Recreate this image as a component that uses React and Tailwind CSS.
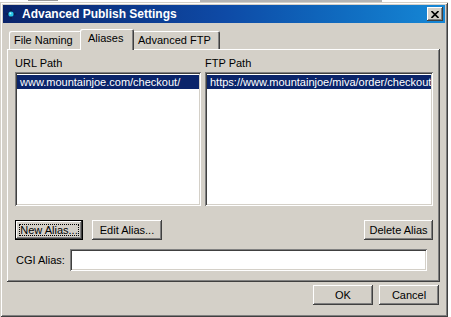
import React from "react";

const raised =
  "shadow-[inset_-1px_-1px_0_#404040,inset_1px_1px_0_#ffffff,inset_-2px_-2px_0_#808080,inset_2px_2px_0_#d4d0c8]";
const sunken =
  "shadow-[inset_1px_1px_0_#808080,inset_-1px_-1px_0_#ffffff,inset_2px_2px_0_#404040,inset_-2px_-2px_0_#d4d0c8]";
const tabEdge =
  "shadow-[inset_1px_1px_0_#ffffff,inset_-1px_0_0_#404040,inset_-2px_0_0_#808080]";

const TitleIcon = () => (
  <svg width="12" height="12" viewBox="0 0 12 12">
    <path d="M6 0 L7.3 4.7 L12 6 L7.3 7.3 L6 12 L4.7 7.3 L0 6 L4.7 4.7 Z" fill="#0b1a40" />
    <circle cx="6" cy="6" r="2.6" fill="#28c8e8" />
    <circle cx="5.4" cy="5.4" r="0.9" fill="#b8f4ff" />
  </svg>
);

const Button = ({ children, width, isDefault }) =>
  isDefault ? (
    <div
      className="h-[20px] border border-black bg-[#d4d0c8] p-[3px] shadow-[inset_-1px_-1px_0_#404040,inset_1px_1px_0_#ffffff,inset_-2px_-2px_0_#808080]"
      style={{ width }}
    >
      <div className="flex h-full items-center justify-center border border-dotted border-black leading-none">
        {children}
      </div>
    </div>
  ) : (
    <div
      className={`flex h-[20px] items-center justify-center bg-[#d4d0c8] leading-none ${raised}`}
      style={{ width }}
    >
      {children}
    </div>
  );

export default function App() {
  return (
    <div className="h-[317px] w-[451px] overflow-hidden bg-white font-['Liberation_Sans',Arial,sans-serif] text-[11px] text-black">
      {/* window behind */}
      <div className="flex h-[2px] items-start">
        <div className="ml-[28px] h-[1px] w-[30px] bg-[#9a9a9a]" />
        <div className="ml-[142px] h-[2px] w-[182px] bg-[#b4b4b4]" />
      </div>

      <div className="flex h-[315px] w-[448px] flex-col bg-[#d4d0c8] p-[3px] shadow-[inset_1px_1px_0_#d4d0c8,inset_-1px_-1px_0_#404040,inset_2px_2px_0_#ffffff,inset_-2px_-2px_0_#808080]">
        {/* Title bar */}
        <div className="flex h-[18px] items-center bg-gradient-to-r from-[#0a246a] via-[#0e4aa6] to-[#1688d6] pl-[2px] pr-[2px]">
          <TitleIcon />
          <span className="ml-[5px] text-[12px] font-bold text-white">Advanced Publish Settings</span>
          <div className={`ml-auto flex h-[14px] w-[16px] items-center justify-center bg-[#d4d0c8] ${raised}`}>
            <svg width="8" height="7" viewBox="0 0 8 7">
              <path d="M0.5 0 L7.5 7 M7.5 0 L0.5 7" stroke="#000" strokeWidth="1.6" />
            </svg>
          </div>
        </div>

        {/* Tabs */}
        <div className="ml-[6px] mt-[6px] flex h-[20px] items-end">
          <div className={`h-[18px] w-[73px] rounded-t-[2px] pl-[5px] pt-[3px] leading-[13px] ${tabEdge}`}>File Naming</div>
          <div className={`relative z-10 -mx-[2px] -mb-[1px] h-[21px] w-[54px] rounded-t-[2px] bg-[#d4d0c8] pl-[8px] pt-[3px] leading-[13px] ${tabEdge}`}>
            Aliases
          </div>
          <div className={`h-[18px] w-[88px] rounded-t-[2px] pl-[6px] pt-[3px] leading-[13px] ${tabEdge}`}>Advanced FTP</div>
        </div>

        {/* Panel */}
        <div className={`ml-[4px] flex h-[233px] w-[433px] flex-col pl-[8px] pr-[7px] pt-[8px] ${raised}`}>
          <div className="flex gap-[4px]">
            <div className="flex w-[187px] flex-col">
              <div className="leading-[13px]">URL Path</div>
              <div className={`mt-[2px] h-[134px] bg-white p-[2px] ${sunken}`}>
                <div className="mt-[1px] h-[14px] overflow-hidden whitespace-nowrap bg-[#0a246a] pl-[3px] leading-[14px] text-white">
                  www.mountainjoe.com/checkout/
                </div>
              </div>
            </div>
            <div className="flex w-[228px] flex-col">
              <div className="leading-[13px]">FTP Path</div>
              <div className={`mt-[2px] h-[134px] bg-white p-[2px] ${sunken}`}>
                <div className="mt-[1px] h-[14px] overflow-hidden whitespace-nowrap bg-[#0a246a] pl-[3px] leading-[14px] text-white">
                  https://www.mountainjoe/miva/order/checkout
                </div>
              </div>
            </div>
          </div>

          <div className="mt-[14px] flex">
            <Button width={68} isDefault>
              New Alias...
            </Button>
            <div className="ml-[9px]">
              <Button width={70}>Edit Alias...</Button>
            </div>
            <div className="ml-auto">
              <Button width={69}>Delete Alias</Button>
            </div>
          </div>

          <div className="mt-[9px] flex items-center">
            <div className="w-[55px] pl-[1px]">CGI Alias:</div>
            <div className={`h-[22px] w-[357px] bg-white ${sunken}`} />
          </div>
        </div>

        {/* Dialog buttons */}
        <div className="mt-[3px] flex justify-end gap-[6px] pr-[6px]">
          <Button width={60}>OK</Button>
          <Button width={60}>Cancel</Button>
        </div>
      </div>
    </div>
  );
}
